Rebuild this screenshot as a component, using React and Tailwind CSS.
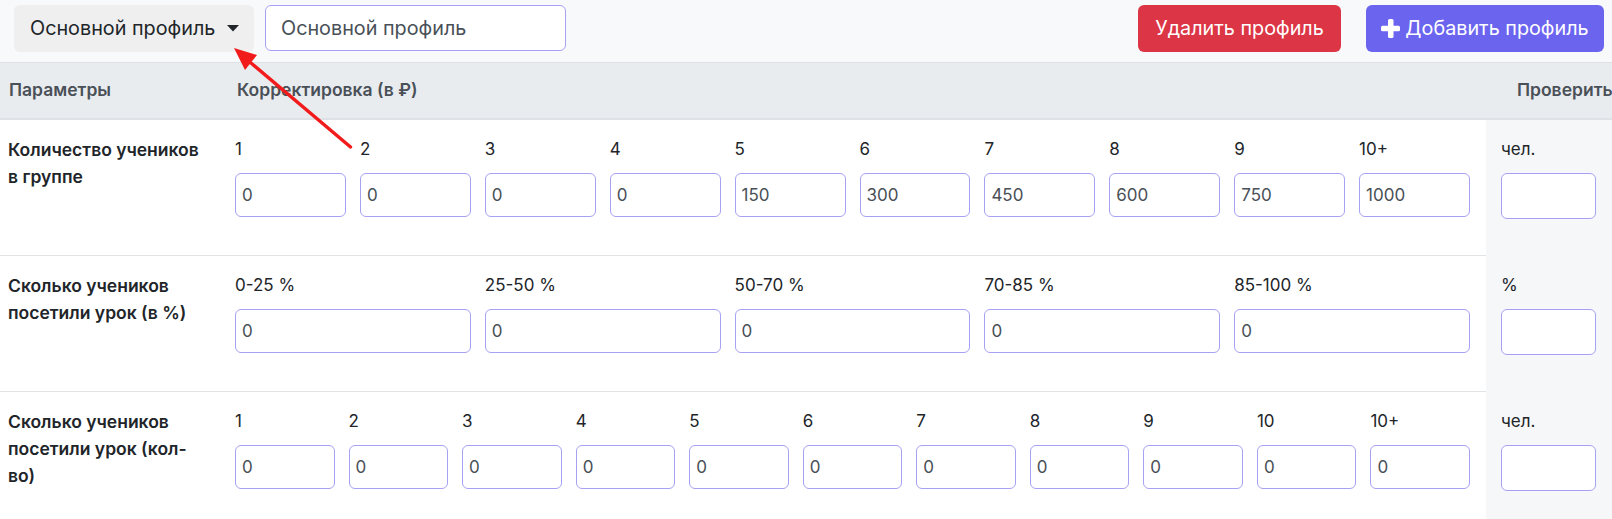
const rows = [
  {
    title: "Количество учеников в группе",
    cols: ["1", "2", "3", "4", "5", "6", "7", "8", "9", "10+"],
    values: ["0", "0", "0", "0", "150", "300", "450", "600", "750", "1000"],
    grid: "grid-cols-10",
    unit: "чел.",
  },
  {
    title: "Сколько учеников посетили урок (в %)",
    cols: ["0-25 %", "25-50 %", "50-70 %", "70-85 %", "85-100 %"],
    values: ["0", "0", "0", "0", "0"],
    grid: "grid-cols-5",
    unit: "%",
  },
  {
    title: "Сколько учеников посетили урок (кол-во)",
    cols: ["1", "2", "3", "4", "5", "6", "7", "8", "9", "10", "10+"],
    values: ["0", "0", "0", "0", "0", "0", "0", "0", "0", "0", "0"],
    grid: "grid-cols-11",
    unit: "чел.",
  },
];

const PlusIcon = () => (
  <svg width="19" height="19" viewBox="0 0 19 19" className="mr-[5px]">
    <rect x="7" y="0" width="5.5" height="19" rx="1.5" fill="white" />
    <rect x="0" y="6.75" width="19" height="5.5" rx="1.5" fill="white" />
  </svg>
);

const Arrow = () => (
  <svg
    className="absolute left-0 top-0 pointer-events-none"
    width="400"
    height="200"
    viewBox="0 0 400 200"
  >
    <line x1="350.5" y1="147" x2="251" y2="63" stroke="#f21b1b" strokeWidth="3.4" strokeLinecap="round" />
    <polygon points="234,48 257,55 245,70" fill="#f21b1b" />
  </svg>
);

const App = () => {
  return (
    <div className="relative w-[1612px] h-[519px] overflow-hidden bg-white font-['Inter','Noto_Sans',sans-serif] text-[#212529]">
      {/* top bar */}
      <div className="flex items-start h-[62px] bg-[#f8f9fa] pt-[5px] pl-[14px] pr-[8px]">
        <button
          type="button"
          className="flex items-center justify-between w-[240px] h-[47px] rounded-md bg-[#efefef] pl-4 pr-[15px] text-[19.8px] text-[#212529]"
        >
          <span>Основной профиль</span>
          <svg width="12" height="7" viewBox="0 0 12 7">
            <polygon points="0,0 12,0 6,6.5" fill="#212529" />
          </svg>
        </button>
        <input
          type="text"
          defaultValue="Основной профиль"
          className="ml-[11px] w-[301px] h-[46px] rounded-md border border-[#a7a1f4] bg-white px-[15px] text-[19.8px] text-[#495057] outline-none"
        />
        <div className="flex-1" />
        <button
          type="button"
          className="w-[203px] h-[47px] rounded-md bg-[#dc3545] text-white text-[19.8px]"
        >
          Удалить профиль
        </button>
        <button
          type="button"
          className="ml-[25px] flex items-center justify-center w-[238px] h-[47px] rounded-md bg-[#6b64ef] text-white text-[19.8px]"
        >
          <PlusIcon />
          Добавить профиль
        </button>
      </div>

      {/* header */}
      <div className="flex items-center w-[1660px] h-[58px] bg-[#e9ecef] border-t border-b-2 border-[#dee2e6] text-[17.5px] font-semibold text-[#495057]">
        <div className="w-[235px] pl-[9px]">Параметры</div>
        <div className="w-[1251px] pl-[2px]">Корректировка (в ₽)</div>
        <div className="flex-1 pl-[31px]">Проверить</div>
      </div>

      {/* rows */}
      {rows.map((row) => (
        <div key={row.title} className="flex w-[1660px] h-[136px]">
          <div className="w-[235px] pl-2 pr-[27px] pt-4 border-b border-[#e2e3e7] text-[17.5px] font-semibold leading-[27px]">
            {row.title}
          </div>
          <div className={`w-[1251px] pr-4 pt-4 border-b border-[#e2e3e7] grid ${row.grid} gap-x-[14px] content-start`}>
            {row.cols.map((c, i) => (
              <div key={c + i} className="flex flex-col">
                <span className="text-[17px] leading-[27px]">{c}</span>
                <input
                  type="text"
                  defaultValue={row.values[i]}
                  className="mt-[10px] w-full h-[44px] rounded-md border border-[#a7a1f4] px-[6px] text-[17px] text-[#495057] outline-none"
                />
              </div>
            ))}
          </div>
          <div className="flex-1 bg-[#f6f7f9] pl-[15px] pt-4">
            <div className="text-[17px] leading-[27px]">{row.unit}</div>
            <input
              type="text"
              className="mt-[10px] w-[95px] h-[46px] rounded-md border border-[#a7a1f4] bg-white outline-none"
            />
          </div>
        </div>
      ))}

      <Arrow />
    </div>
  );
};

export default App;
